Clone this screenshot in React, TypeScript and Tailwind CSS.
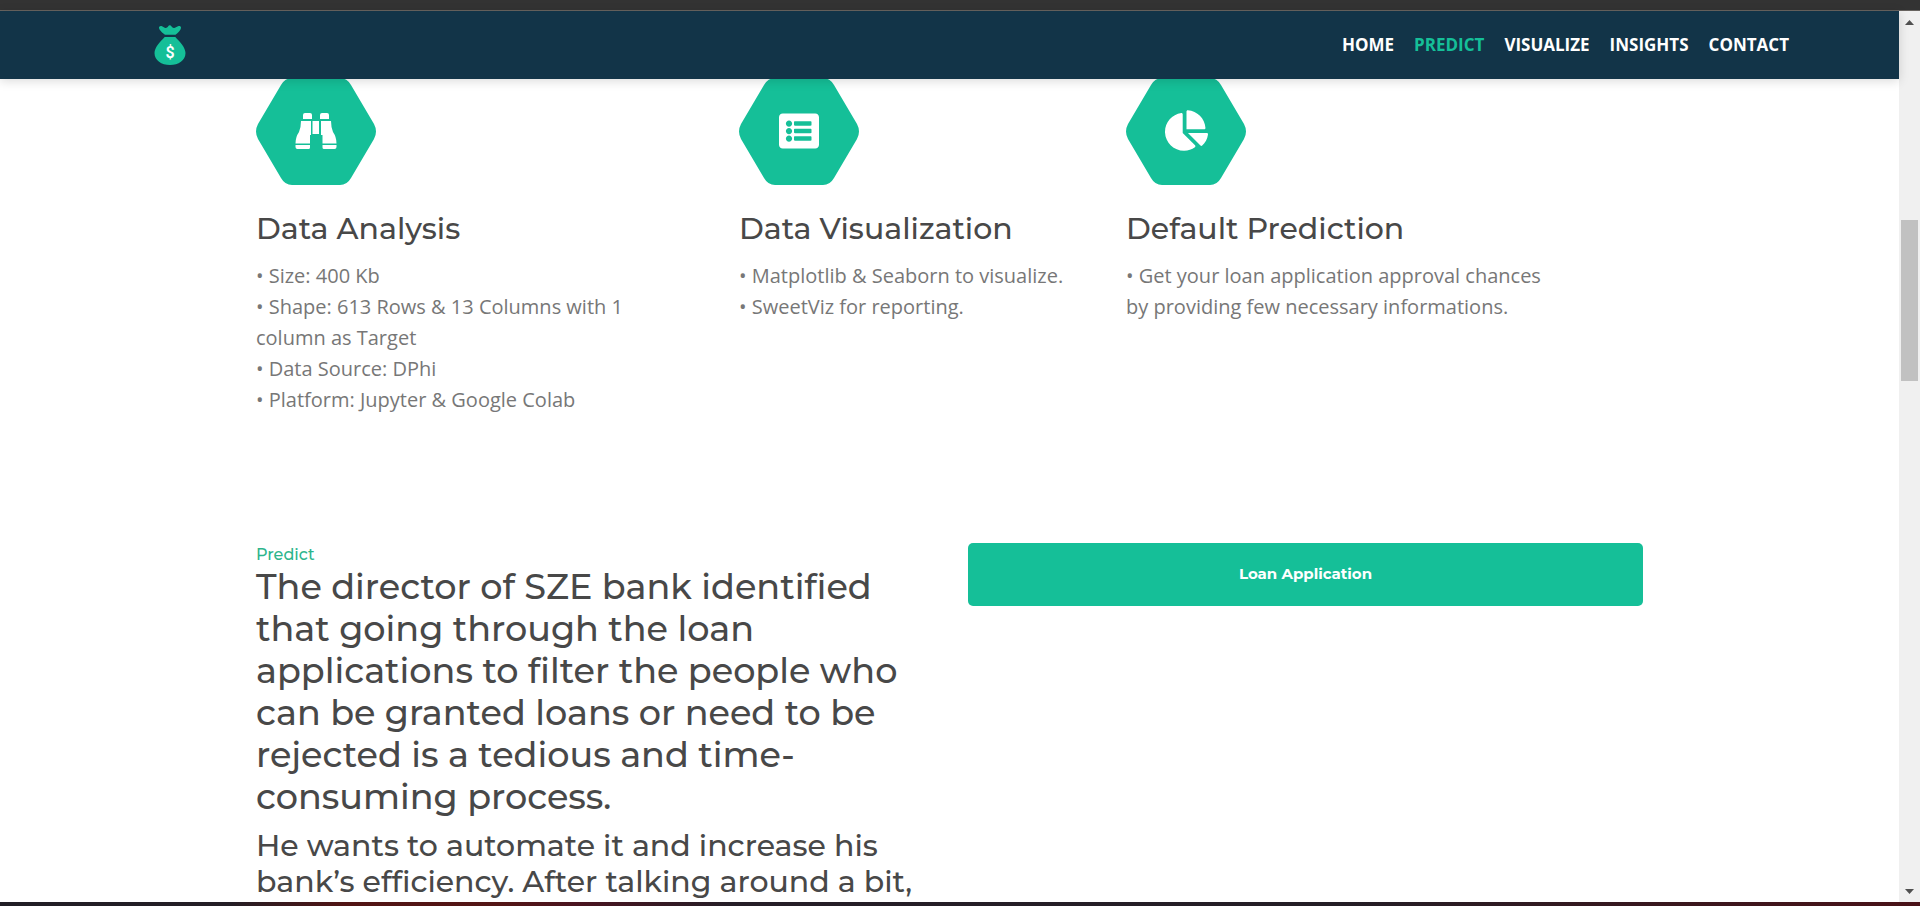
import { FaChartPie, FaListAlt } from "react-icons/fa";
import type { ReactNode } from "react";

const navItems = ["HOME", "PREDICT", "VISUALIZE", "INSIGHTS", "CONTACT"];

function MoneyBag() {
  return (
    <svg viewBox="0 0 32 40" className="h-10 w-8" aria-hidden="true">
      <path
        fill="#15bf98"
        d="M11 9.8C8.500 8 5.300 5 5 3c-.1-1.700 1.500-2.500 3-1.700C9.500 2 11 3.400 12.400 2.700c.8-.4 1.400-.7 1.800-1.500.6-1.300 2.600-1.300 3.200 0 .4.8 1 1.100 1.800 1.500C20.600 3.400 22.300 2.100 24 1.300c1.600-.8 3.200.1 3 1.700-.3 2-3 5-5.500 6.800zM10.700 12h10.600C26 17 31.500 22.500 31.500 28 31.500 35.500 24.500 40 16 40S.5 35.500.5 28c0-5.500 5.500-11 10.200-16z"
      />
      <text x="16" y="33" textAnchor="middle" fontSize="16" fontWeight="600" fill="#fff" className="font-['Roboto',sans-serif]">$</text>
    </svg>
  );
}

function Binoculars() {
  return (
    <svg viewBox="0 0 42 36" className="h-9 w-[42px]" fill="currentColor" aria-hidden="true">
      <path d="M10 0h5q2 0 2 2v4H8V2q0-2 2-2zM27 0h5q2 0 2 2v4h-9V2q0-2 2-2zM17.500 8h6.500v13h-6.500zM6 8h10v14h-1v8.500H.5Q.5 24 4 19 6 14 6 8zM26 8h10q0 6 2 11 3.500 5 3.500 11.500H27.500V22H26zM.5 32H15v2.500q0 1.500-1.500 1.500H2.500Q.5 36 .5 34zM27.500 32h14v2q0 2-2 2H29q-1.500 0-1.500-1.500z" />
    </svg>
  );
}

function Hexagon({ children }: { children: ReactNode }) {
  return (
    <div className="grid h-[107px] w-[120px] place-items-center text-white">
      <svg viewBox="0 0 120 107" className="col-start-1 row-start-1 h-[107px] w-[120px]" fill="#15bf98" aria-hidden="true">
        <path d="M36 0H84Q91 0 95 7L118 46Q122 53.500 118 61L95 100Q91 107 84 107H36Q29 107 25 100L2 61Q-2 53.500 2 46L25 7Q29 0 36 0Z" />
      </svg>
      <div className="col-start-1 row-start-1 pb-0.5">{children}</div>
    </div>
  );
}

function Feature({ title, icon, items }: { title: string; icon: ReactNode; items: string[] }) {
  return (
    <article className="min-w-0">
      <Hexagon>{icon}</Hexagon>
      <h2 className="mt-[26px] text-[30px] leading-9 font-medium text-[#484848]">{title}</h2>
      <ul className="mt-[13px] max-w-[430px] font-['Open_Sans',sans-serif] text-xl leading-[31px] text-[#777777]">
        {items.map((item) => (
          <li key={item}>{`• ${item}`}</li>
        ))}
      </ul>
    </article>
  );
}

function Scrollbar() {
  return (
    <div className="flex w-[21px] shrink-0 flex-col items-center bg-[#f0f0f0] pt-[9px] pb-2" aria-hidden="true">
      <svg viewBox="0 0 9 5" className="h-[5px] w-[9px]" fill="#505050"><path d="M0 5 4.500 0 9 5z" /></svg>
      <div className="mt-[195px] h-[161px] w-[17px] bg-[#c1c1c1]" />
      <svg viewBox="0 0 9 5" className="mt-auto h-[5px] w-[9px]" fill="#505050"><path d="M0 0h9L4.500 5z" /></svg>
    </div>
  );
}

export default function App() {
  return (
    <div className="flex h-screen flex-col overflow-hidden bg-white font-['Montserrat','Inter',sans-serif]">
      <div className="h-[11px] shrink-0 border-b border-[#686460] bg-[#333333]" />
      <div className="flex min-h-0 flex-1">
        <div className="flex min-w-0 flex-1 flex-col">
          <header className="z-10 flex h-[68px] shrink-0 items-center justify-between bg-[#123448] pr-[110px] pl-[154px] shadow-[0_2px_10px_rgba(0,0,0,0.15)]">
            <a href="#home" aria-label="Home"><MoneyBag /></a>
            <nav className="flex gap-5 font-['Open_Sans',sans-serif] text-[17px] leading-7 font-bold text-white">
              {navItems.map((item) => (
                <a key={item} href={`#${item.toLowerCase()}`} className={item === "PREDICT" ? "text-[#15bf98]" : ""}>
                  {item}
                </a>
              ))}
            </nav>
          </header>
          <main className="-mt-px min-h-0 flex-1 overflow-hidden px-64">
            <section className="grid grid-cols-[483fr_387fr_517fr]">
              <Feature
                title="Data Analysis"
                icon={<Binoculars />}
                items={["Size: 400 Kb", "Shape: 613 Rows & 13 Columns with 1 column as Target", "Data Source: DPhi", "Platform: Jupyter & Google Colab"]}
              />
              <Feature title="Data Visualization" icon={<FaListAlt size={40} />} items={["Matplotlib & Seaborn to visualize.", "SweetViz for reporting."]} />
              <Feature title="Default Prediction" icon={<FaChartPie size={43} />} items={["Get your loan application approval chances by providing few necessary informations."]} />
            </section>
            <section className="mt-32 grid grid-cols-2 items-start gap-[37px]">
              <div className="font-medium text-[#484848]">
                <p className="text-base leading-[23px] text-[#2db58c]">Predict</p>
                <h2 className="text-[35px] leading-[42px]">
                  The director of SZE bank identified that going through the loan applications to filter the people who can be granted loans or need to be rejected is a tedious and time-consuming process.
                </h2>
                <h3 className="mt-2.5 text-[30px] leading-9">He wants to automate it and increase his bank’s efficiency. After talking around a bit,</h3>
              </div>
              <button type="button" className="h-[63px] rounded-[5px] bg-[#15bf98] text-[15px] font-bold text-white">Loan Application</button>
            </section>
          </main>
        </div>
        <Scrollbar />
      </div>
      <div className="h-1 shrink-0 bg-[linear-gradient(90deg,#211e25_0%,#241e25_12%,#521414_18%,#541616_26%,#4b1420_30%,#251e27_38%,#241e26_70%,#4a1218_100%)]" />
    </div>
  );
}
